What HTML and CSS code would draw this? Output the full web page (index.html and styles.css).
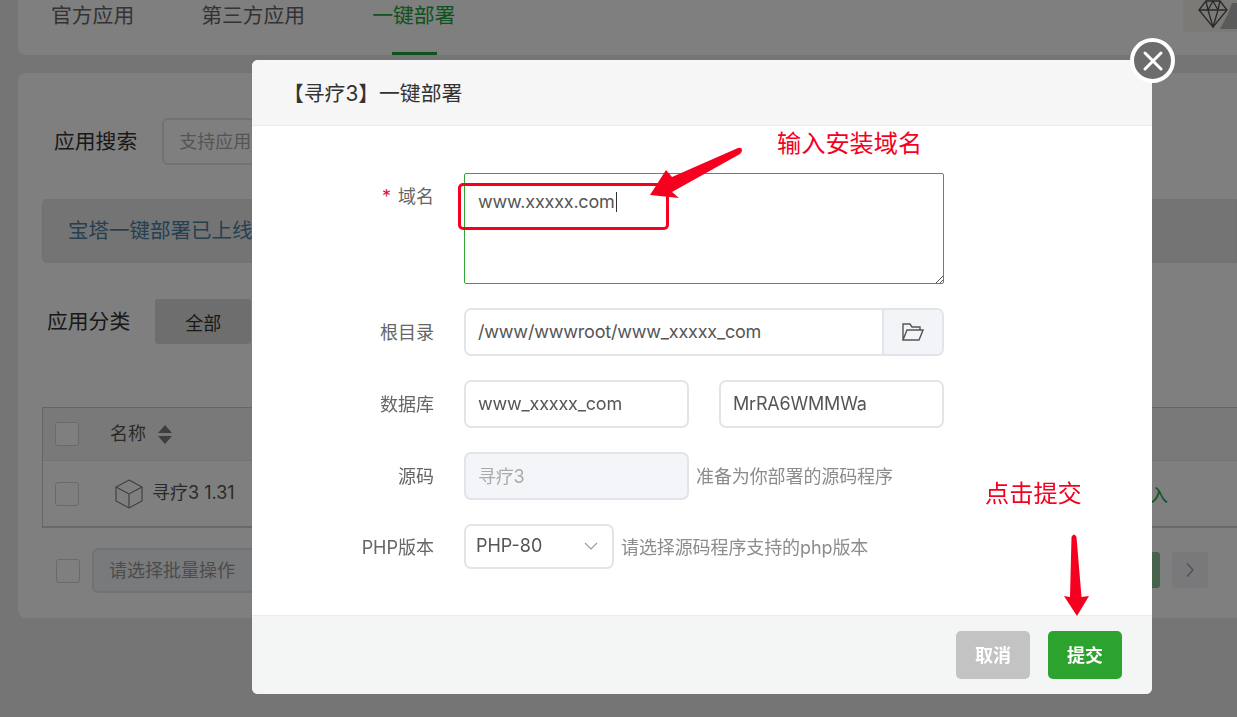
FILE: index.html
```html
<!DOCTYPE html>
<html lang="en">
<head>
    <meta charset="UTF-8">
    <meta name="viewport" content="width=device-width, initial-scale=1.0">
    <title>一键部署</title>
    <link rel="stylesheet" href="styles.css">
</head>
<body>
    <div class="page">
        <div class="card tabs">
            <a class="tab">官方应用</a>
            <a class="tab">第三方应用</a>
            <a class="tab active">一键部署</a>
            <div class="vip">
                <svg width="32" height="28" viewBox="0 0 32 28" fill="none" stroke="#505050" stroke-width="1.3">
                    <path d="M9 1h14l7 9-14 17L2 10z"/>
                    <path d="M2 10h28M11 10l5 17 5-17M9 1l2 9 5-9 5 9 2-9"/>
                </svg>
                <span class="vip-corner"></span>
            </div>
        </div>

        <div class="card main">
            <div class="search-row">
                <span class="row-title">应用搜索</span>
                <div class="search-box">支持应用名称、字段模糊搜索</div>
            </div>
            <div class="alert">宝塔一键部署已上线，支持快速部署常用源码程序</div>
            <div class="cat-row">
                <span class="row-title">应用分类</span>
                <button class="cat-btn">全部</button>
            </div>

            <div class="table">
                <div class="table-head">
                    <span class="check"></span>
                    <span class="col-name">名称</span>
                    <svg class="sort" width="14" height="19" viewBox="0 0 14 19" fill="#7c7c7c">
                        <path d="M7 0l7 8H0zM7 19l-7-8h14z"/>
                    </svg>
                </div>
                <div class="table-row">
                    <span class="check"></span>
                    <svg class="cube" width="28" height="30" viewBox="0 0 28 30" fill="none" stroke="#777" stroke-width="1.1">
                        <path d="M14 1l13 7v14l-13 7-13-7V8z"/>
                        <path d="M1 8l13 7 13-7M14 15v14"/>
                    </svg>
                    <span class="app-name">寻疗3 1.31</span>
                    <span class="import">导入</span>
                </div>
            </div>

            <div class="table-foot">
                <span class="check"></span>
                <div class="batch">请选择批量操作</div>
                <div class="pager">
                    <span class="page-num">1</span>
                    <span class="page-next">
                        <svg width="10" height="18" viewBox="0 0 10 18" fill="none" stroke="#9a9a9a" stroke-width="1.2"><path d="M2 2.500L8 9l-6 6.500"/></svg>
                    </span>
                </div>
            </div>
        </div>
    </div>

    <div class="overlay"></div>

    <div class="modal">
        <div class="modal-head">【寻疗3】一键部署</div>
        <button class="modal-close">
            <svg width="22" height="22" viewBox="0 0 22 22" fill="none" stroke="#fff" stroke-width="3" stroke-linecap="round"><path d="M3 3l16 16M19 3L3 19"/></svg>
        </button>
        <div class="modal-body">
            <label class="label top"><em>*</em> 域名</label>
            <div class="textarea">www.xxxxx.com<span class="caret"></span>
                <svg class="grip" width="8" height="8" viewBox="0 0 8 8" stroke="#555" stroke-width="1"><path d="M8 1L1 8M8 5L5 8"/></svg>
            </div>

            <label class="label">根目录</label>
            <div class="input-group">
                <input class="input grow" value="/www/wwwroot/www_xxxxx_com">
                <span class="addon">
                    <svg width="22" height="18" viewBox="0 0 22 18" fill="none" stroke="#555" stroke-width="1.400"><path d="M1 17V1h7l2 3h8v3M1 17h16l4-10H5z"/></svg>
                </span>
            </div>

            <label class="label">数据库</label>
            <div class="control-row db">
                <input class="input half" value="www_xxxxx_com">
                <input class="input half" value="MrRA6WMMWa">
            </div>

            <label class="label">源码</label>
            <div class="control-row">
                <input class="input half disabled" value="寻疗3" disabled>
                <span class="hint">准备为你部署的源码程序</span>
            </div>

            <label class="label">PHP版本</label>
            <div class="control-row">
                <div class="select">PHP-80
                    <svg width="14" height="8" viewBox="0 0 14 8" fill="none" stroke="#999" stroke-width="1.100"><path d="M1 1l6 6 6-6"/></svg>
                </div>
                <span class="hint">请选择源码程序支持的php版本</span>
            </div>
        </div>
        <div class="modal-foot">
            <button class="btn cancel">取消</button>
            <button class="btn submit">提交</button>
        </div>
    </div>

    <!-- red notes drawn over the screenshot -->
    <div class="note note-domain">输入安装域名</div>
    <div class="note note-submit">点击提交</div>
    <div class="note-box"></div>
    <svg class="note-arrows" width="1237" height="717" viewBox="0 0 1237 717" fill="#f5001f">
        <path d="M650 195L666 170 672 177 738 148Q742 147 742 150 742 152 740 154L672 192 679 198z"/>
        <path d="M1071.500 537Q1074 532 1076.500 537L1081.500 597 1089 596 1077 616 1064 596 1070 597z"/>
    </svg>
</body>
</html>
```

FILE: styles.css
```css
* {
    box-sizing: border-box;
}
body {
    margin: 0;
    width: 1237px;
    height: 717px;
    overflow: hidden;
    background-color: #ebebeb;
    font-family: Inter, "Noto Sans CJK SC", sans-serif;
    font-size: 18px;
    color: #555;
}
.page {
    padding-left: 18px;
}
.card {
    background-color: #fff;
    border-radius: 8px;
}
.tabs {
    display: flex;
    gap: 67px;
    height: 55px;
    padding-left: 33px;
    border-radius: 0 0 0 8px;
    position: relative;
}
.tab {
    position: relative;
    font-size: 20.8px;
    line-height: 32px;
    color: #666;
}
.tab.active {
    color: #20a53a;
}
.tab.active::after {
    content: "";
    position: absolute;
    left: 20px;
    bottom: 0;
    width: 45px;
    height: 3px;
    background-color: #20a53a;
}
.vip {
    margin-left: auto;
    width: 54px;
    height: 32px;
    padding: 0 0 0 14px;
    background-color: #f7f5ee;
    border-radius: 4px 0 0 4px;
    position: relative;
}
.vip-corner {
    position: absolute;
    right: 0;
    top: 3px;
    width: 17px;
    height: 26px;
    background-color: #b4b4b4;
    clip-path: polygon(70% 0, 100% 0, 100% 100%, 0 100%, 45% 45%);
}
.main {
    margin-top: 18px;
    height: 545px;
    padding: 45px 0 0 24px;
    border-radius: 8px 0 0 8px;
}
.search-row {
    display: flex;
    align-items: center;
    gap: 25px;
    padding-left: 12px;
}
.row-title {
    padding-bottom: 4px;
    font-size: 20.8px;
    color: #333;
}
.search-box {
    width: 360px;
    height: 47px;
    line-height: 43px;
    padding-left: 15px;
    border: 2px solid #e2e4ea;
    border-radius: 6px;
    color: #aaa;
    white-space: nowrap;
    overflow: hidden;
}
.alert {
    height: 64px;
    line-height: 62px;
    margin-top: 34px;
    padding-left: 25px;
    background-color: #e9e9e9;
    border: 1px solid #e2e2e2;
    border-radius: 5px 0 0 5px;
    color: #4d7fa3;
    font-size: 20.5px;
}
.cat-row {
    display: flex;
    align-items: center;
    gap: 25px;
    margin-top: 36px;
    padding-left: 5px;
}
.cat-btn {
    width: 96px;
    height: 45px;
    border: none;
    border-radius: 3px;
    background-color: #dcdcdc;
    color: #333;
    font: inherit;
}
.table {
    margin-top: 63px;
    border: 1px solid #ccc;
    border-right: none;
    border-bottom: 2px solid #d0d0de;
}
.check {
    flex: none;
    width: 24px;
    height: 24px;
    border: 1px solid #d4d4d4;
    border-radius: 3px;
    background-color: #fff;
}
.table-head {
    display: flex;
    align-items: center;
    height: 53px;
    padding-left: 12px;
    background-color: #f2f2f2;
    border-bottom: 1px solid #e2e2ea;
}
.col-name {
    margin-left: 31px;
    padding-bottom: 4px;
}
.sort {
    margin-left: 12px;
}
.table-row {
    display: flex;
    align-items: center;
    height: 65px;
    padding-left: 12px;
}
.cube {
    margin-left: 36px;
}
.app-name {
    margin-left: 9px;
    padding-bottom: 6px;
}
.import {
    margin-left: auto;
    margin-right: 69px;
    color: #20a53a;
}
.table-foot {
    display: flex;
    align-items: center;
    margin-top: 20px;
    padding: 0 29px 0 14px;
    gap: 12px;
}
.batch {
    width: 300px;
    height: 45px;
    line-height: 41px;
    padding-left: 15px;
    background-color: #f3f4f8;
    border: 2px solid #e2e4ea;
    border-radius: 6px;
    color: #999;
}
.pager {
    margin-left: auto;
    margin-bottom: 1px;
    display: flex;
    gap: 12px;
}
.page-num {
    width: 36px;
    height: 36px;
    background-color: #8cc49a;
    border-radius: 3px;
    color: #fff;
    text-align: center;
    line-height: 36px;
}
.page-next {
    display: flex;
    align-items: center;
    justify-content: center;
    width: 36px;
    height: 36px;
    background-color: #f2f3f7;
    border-radius: 3px;
}
.overlay {
    position: fixed;
    inset: 0;
    background-color: rgba(0, 0, 0, 0.5);
}
.modal {
    position: absolute;
    left: 252px;
    top: 60px;
    width: 900px;
    height: 634px;
    display: flex;
    flex-direction: column;
    background-color: #fff;
    border-radius: 6px;
}
.modal-head {
    height: 66px;
    line-height: 67px;
    padding-left: 31px;
    background-color: #f6f6f6;
    border-bottom: 1px solid #eaeaea;
    border-radius: 6px 6px 0 0;
    font-size: 20.8px;
    color: #333;
}
.modal-close {
    position: absolute;
    right: -23px;
    top: -22px;
    width: 45px;
    height: 45px;
    padding: 0;
    display: flex;
    align-items: center;
    justify-content: center;
    background-color: #6c6c6c;
    border: 4px solid #fff;
    border-radius: 50%;
}
.modal-body {
    flex: 1;
    display: grid;
    grid-template-columns: 182px 480px;
    grid-auto-rows: min-content;
    column-gap: 30px;
    row-gap: 24px;
    padding-top: 47px;
}
.label {
    align-self: center;
    padding-bottom: 2px;
    text-align: right;
    color: #666;
    white-space: nowrap;
}
.label.top {
    align-self: start;
    margin-top: 9px;
}
.label em {
    font-style: normal;
    margin-right: 2px;
    color: #e8103c;
}
.textarea {
    position: relative;
    height: 111px;
    padding: 15px 13px;
    line-height: 26px;
    letter-spacing: -0.2px;
    border: 1px solid #2fa838;
    border-radius: 2px;
    white-space: nowrap;
}
.caret {
    display: inline-block;
    width: 1px;
    height: 20px;
    margin-left: 1px;
    vertical-align: -4px;
    background-color: #333;
}
.grip {
    position: absolute;
    right: 0;
    bottom: 0;
}
.input {
    height: 48px;
    padding: 0 12px 2px;
    border: 2px solid #e2e4ea;
    border-radius: 7px;
    font: inherit;
    letter-spacing: -0.2px;
    color: #555;
    outline: none;
}
.input-group {
    display: flex;
    height: 48px;
    border: 2px solid #e2e4ea;
    border-radius: 7px;
}
.input.grow {
    flex: 1;
    height: 44px;
    min-width: 0;
    border: none;
    padding: 0 12px 2px;
}
.addon {
    flex: none;
    width: 60px;
    display: flex;
    align-items: center;
    justify-content: center;
    background-color: #f3f4f8;
    border-left: 2px solid #e2e4ea;
    border-radius: 0 5px 5px 0;
}
.control-row {
    display: flex;
    align-items: center;
    gap: 7px;
}
.control-row.db {
    gap: 30px;
}
.input.half {
    width: 225px;
}
.input.disabled {
    background-color: #f3f5f8;
    color: #aaa;
}
.hint {
    padding-bottom: 2px;
    letter-spacing: -0.1px;
    color: #8c8c8c;
    white-space: nowrap;
}
.select {
    width: 150px;
    height: 45px;
    padding: 0 14px 2px 10px;
    display: flex;
    align-items: center;
    justify-content: space-between;
    border: 2px solid #e2e4ea;
    border-radius: 7px;
}
.modal-foot {
    height: 79px;
    display: flex;
    justify-content: flex-end;
    gap: 18px;
    padding: 15px 30px 0 0;
    background-color: #f4f6f6;
    border-top: 1px solid #ececec;
    border-radius: 0 0 6px 6px;
}
.btn {
    width: 74px;
    height: 48px;
    padding: 0 0 2px;
    border: none;
    border-radius: 5px;
    font: inherit;
    font-weight: 600;
    color: #fff;
}
.cancel {
    background-color: #c3c3c3;
}
.submit {
    background-color: #2ca32f;
}
.note {
    position: absolute;
    font-size: 24.200px;
    line-height: 30px;
    color: #f5001f;
    white-space: nowrap;
}
.note-domain {
    left: 777px;
    top: 129px;
}
.note-submit {
    left: 985px;
    top: 479px;
}
.note-box {
    position: absolute;
    left: 458px;
    top: 183px;
    width: 211px;
    height: 47px;
    border: 3px solid #f5001f;
    border-radius: 5px;
}
.note-arrows {
    position: absolute;
    left: 0;
    top: 0;
    pointer-events: none;
}
```
